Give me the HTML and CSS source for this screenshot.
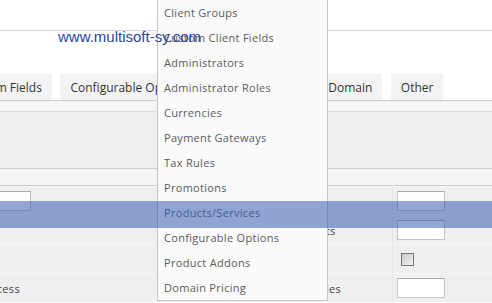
FILE: index.html
```html
<!DOCTYPE html>
<html lang="en">
<head>
    <meta charset="UTF-8">
    <meta name="viewport" content="width=device-width, initial-scale=1.0">
    <title>Edit Product</title>
    <link rel="stylesheet" href="styles.css">
</head>
<body>
    <div class="page">
        <div class="topbar"></div>
        <div class="tabs">
            <div class="tab">Custom Fields</div>
            <div class="tab">Configurable Options</div>
            <div class="tab">Upgrades</div>
            <div class="tab">Free Domain</div>
            <div class="tab">Other</div>
        </div>
        <div class="panel">
            <div class="strip strip-thin"></div>
            <div class="block"></div>
            <div class="strip strip-wide"></div>
            <div class="grid">
                <div class="cell"><input type="text" class="field field-left"></div>
                <div class="cell label">Stock Quantity</div>
                <div class="cell value"><input type="text" class="field"></div>

                <div class="cell"></div>
                <div class="cell label">Affiliate Payments</div>
                <div class="cell value"><input type="text" class="field"></div>

                <div class="cell"></div>
                <div class="cell label">Featured</div>
                <div class="cell value"><input type="checkbox" class="check"></div>

                <div class="cell">Global Access</div>
                <div class="cell label">Product Categories</div>
                <div class="cell value"><input type="text" class="field"></div>
            </div>
        </div>
    </div>

    <div class="menu">
        <div class="menu-item">Client Groups</div>
        <div class="menu-item">Custom Client Fields</div>
        <div class="menu-item">Administrators</div>
        <div class="menu-item">Administrator Roles</div>
        <div class="menu-item">Currencies</div>
        <div class="menu-item">Payment Gateways</div>
        <div class="menu-item">Tax Rules</div>
        <div class="menu-item">Promotions</div>
        <div class="menu-item">Products/Services</div>
        <div class="menu-item">Configurable Options</div>
        <div class="menu-item">Product Addons</div>
        <div class="menu-item">Domain Pricing</div>
    </div>

    <div class="watermark">www.multisoft-sy.com</div>
    <div class="hover-band"></div>
</body>
</html>
```

FILE: styles.css
```css
body {
    margin: 0;
    width: 492px;
    height: 303px;
    overflow: hidden;
    position: relative;
    background: white;
    font-family: "Open Sans", sans-serif;
    color: #444;
}
.topbar {
    height: 30px;
    border-bottom: 1px solid #d4d4d4;
    margin-bottom: 43px;
}
.tabs {
    display: flex;
    gap: 8.5px;
    margin-left: -46.5px;
    height: 26px;
}
.tab {
    padding: 2px 10px 0;
    line-height: 24px;
    background: #f3f3f3;
    font-size: 12px;
    color: #333;
    white-space: nowrap;
}
.panel {
    border-top: 1px solid #cccccc;
    background: #efefef;
}
.strip {
    background: #f5f5f5;
}
.strip-thin {
    height: 10px;
    border-bottom: 1px solid #dddddd;
}
.block {
    height: 56px;
    border-bottom: 1px solid #cccccc;
}
.strip-wide {
    height: 16px;
    border-bottom: 1px solid #cccccc;
}
.grid {
    display: grid;
    grid-template-columns: 292px 160px 1fr;
    grid-auto-rows: 28px;
    margin-left: -60px;
    padding-top: 1px;
    row-gap: 1px;
    background: #f6f6f6;
}
.cell {
    background: #efefef;
    display: flex;
    align-items: center;
    padding-left: 6px;
    font-size: 11px;
    letter-spacing: 0.3px;
    color: #444;
    white-space: nowrap;
    overflow: hidden;
}
.value {
    border-left: 1px solid #e4e4e4;
    padding-left: 4px;
}
.field {
    box-sizing: border-box;
    width: 48px;
    height: 20px;
    margin: 0;
    border: 1px solid #c4c4c4;
    border-top-color: #aaa;
    background: white;
}
.field-left {
    width: 85px;
}
.check {
    appearance: none;
    width: 13px;
    height: 13px;
    margin: 0 0 0 4px;
    border: 1px solid #777;
    background: linear-gradient(135deg, #c8c8c8, #f4f4f4);
}
.menu {
    position: absolute;
    top: 0;
    left: 157px;
    width: 169px;
    background: #fafafa;
    border: 1px solid #c6c6c6;
    border-top: none;
}
.menu-item {
    line-height: 25px;
    padding: 0 6px;
    font-size: 11px;
    letter-spacing: 0.3px;
    color: #5a5a5a;
    white-space: nowrap;
}
.watermark {
    position: absolute;
    top: 28px;
    left: 58px;
    font-family: "Liberation Sans", Arial, sans-serif;
    font-size: 15px;
    color: #2b44a6;
}
.hover-band {
    position: absolute;
    top: 201px;
    left: 0;
    right: 0;
    height: 27px;
    background: rgba(55, 93, 182, 0.55);
}
```
